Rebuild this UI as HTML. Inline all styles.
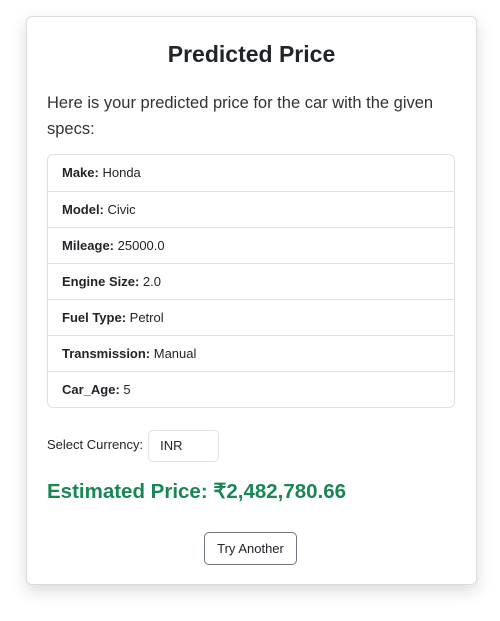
<!DOCTYPE html>
<html><head><meta charset="utf-8"><style>
*{box-sizing:border-box;margin:0;padding:0}
body{width:500px;height:621px;background:#fff;font-family:"Liberation Sans",sans-serif;color:#212529;position:relative;overflow:hidden}
.card{position:absolute;left:26px;top:16px;width:451px;height:569px;border:1px solid #dcdcdc;border-radius:6px;box-shadow:0 6px 16px rgba(0,0,0,.15);background:#fff}
h1{position:absolute;left:0;right:0;top:22px;text-align:center;font-size:23px;font-weight:bold;line-height:30px}
p.i{position:absolute;left:20px;top:73px;width:405px;font-size:16.5px;line-height:26px;color:#333;font-weight:300}
ul{position:absolute;left:20px;top:137px;width:408px;list-style:none;border:1px solid #dee2e6;border-radius:6px}
li{height:36px;line-height:36px;padding-left:14px;font-size:13px;border-top:1px solid #dee2e6}
li:first-child{border-top:none}
.cur{position:absolute;left:20px;top:412px;font-size:13px;line-height:32px}
.sel{display:inline-block;vertical-align:middle;margin-left:5px;width:71px;height:32px;border:1px solid #dee2e6;border-radius:5px;padding-left:11px;font-size:13px;line-height:30px}
.pr{position:absolute;left:20px;top:460px;font-size:20.5px;font-weight:bold;color:#198754;line-height:30px}
.btn{position:absolute;left:177px;top:515px;width:93px;height:33px;border:1px solid #6c757d;border-radius:5px;font-size:13px;text-align:center;line-height:31px}
</style></head><body>
<div class="card">
<h1>Predicted Price</h1>
<p class="i">Here is your predicted price for the car with the given specs:</p>
<ul>
<li><b>Make:</b> Honda</li>
<li><b>Model:</b> Civic</li>
<li><b>Mileage:</b> 25000.0</li>
<li><b>Engine Size:</b> 2.0</li>
<li><b>Fuel Type:</b> Petrol</li>
<li><b>Transmission:</b> Manual</li>
<li><b>Car_Age:</b> 5</li>
</ul>
<div class="cur">Select Currency:<span class="sel">INR</span></div>
<div class="pr">Estimated Price: ₹2,482,780.66</div>
<div class="btn">Try Another</div>
</div>
</body></html>
